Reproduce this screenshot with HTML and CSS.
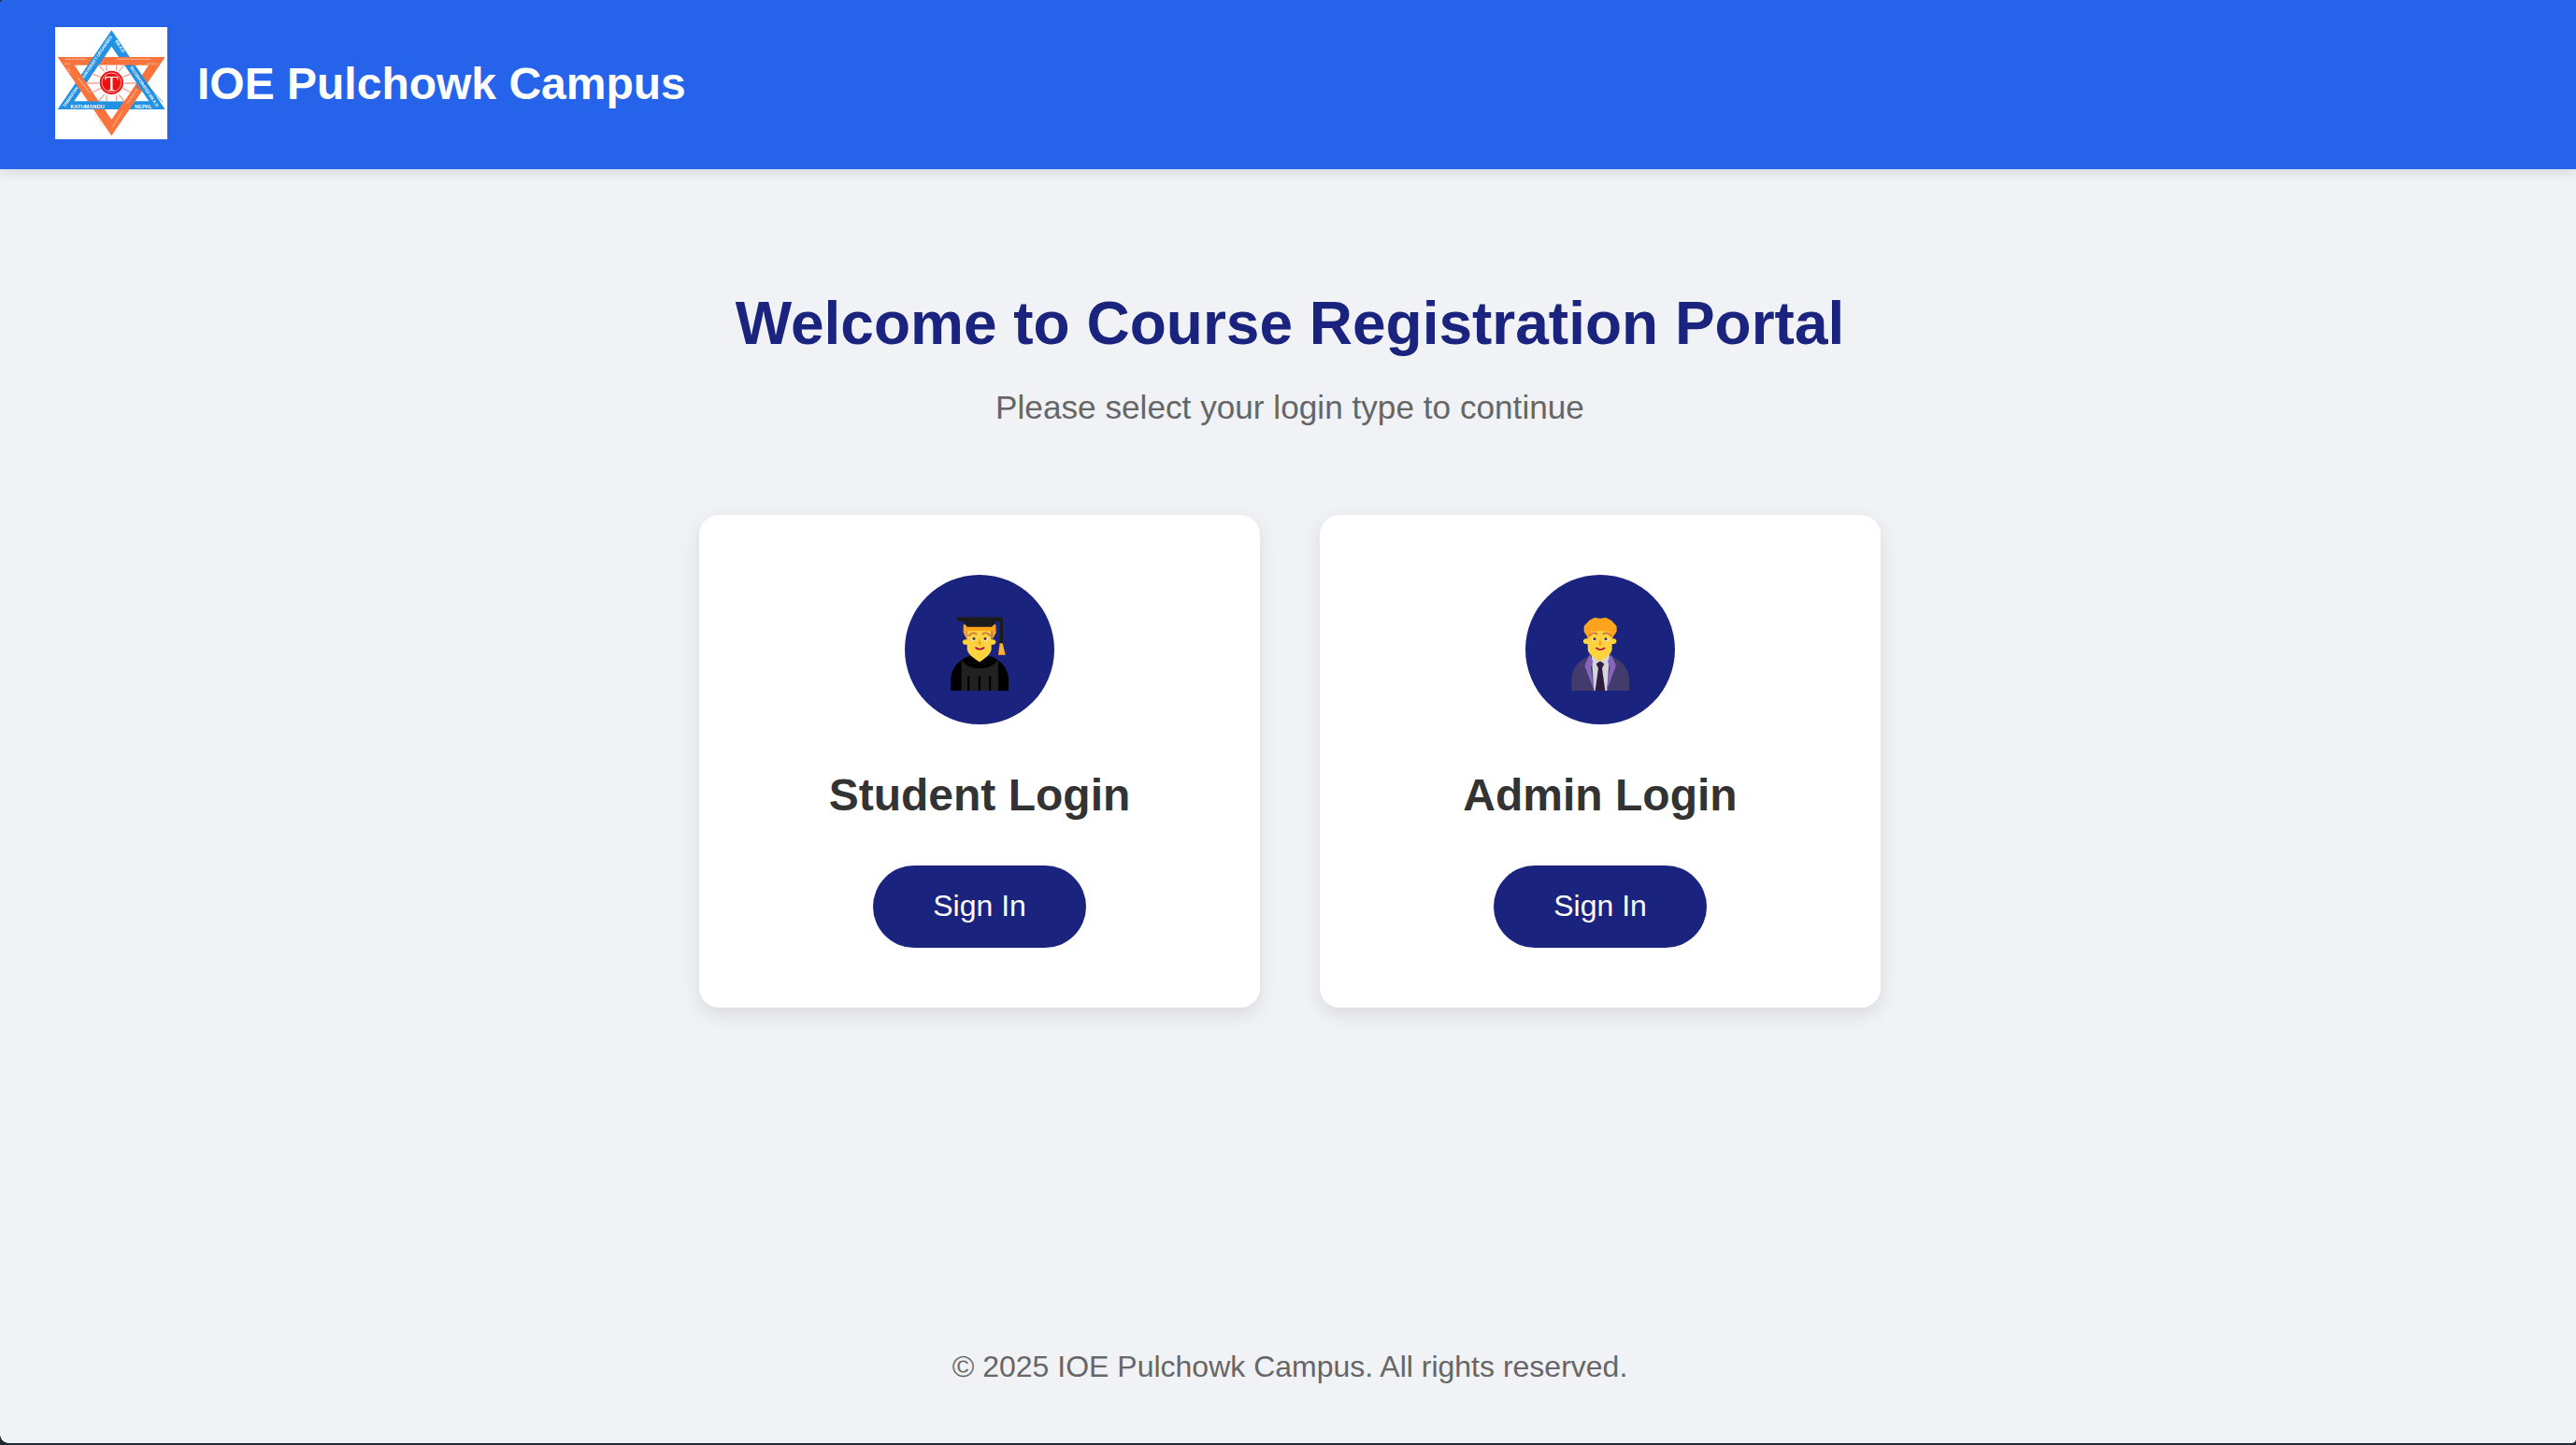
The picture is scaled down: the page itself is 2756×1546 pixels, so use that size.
FILE: index.html
```html
<!DOCTYPE html>
<html lang="en">
<head>
<meta charset="utf-8">
<title>IOE Pulchowk Campus</title>
<link rel="stylesheet" href="styles.css">
</head>
<body>
<header class="site-header">
  <svg class="logo" viewBox="0 0 360 360" aria-label="Tribhuvan University logo">
    <defs>
      <path id="blue-band" fill-rule="evenodd" d="M181 10 353 264H8ZM181 62 61 238H301Z"/>
      <clipPath id="cross-a"><rect x="100" y="96" width="65" height="26"/></clipPath>
      <clipPath id="cross-b"><polygon points="335,122 256.5,238 221,238 300,122"/></clipPath>
      <clipPath id="cross-c"><rect x="100" y="238" width="65" height="26"/></clipPath>
    </defs>
    <rect width="360" height="360" fill="#fff"/>
    <use href="#blue-band" fill="#2391e4"/>
    <path fill="#f8743c" fill-rule="evenodd" d="M8 96H353L181 349ZM62 122 181 297 300 122Z"/>
    <g fill="#2391e4">
      <use href="#blue-band" clip-path="url(#cross-a)"/>
      <use href="#blue-band" clip-path="url(#cross-b)"/>
      <use href="#blue-band" clip-path="url(#cross-c)"/>
    </g>
    <path class="logo-rule" d="M236 122 345 240M212 122 270 200"/>
    <polygon points="140,122 222,122 261,180 222,238 140,238 101,180" fill="#fff"/>
    <path class="logo-petal" d="M140 122 158 142M222 122 204 142M165 122V140M197 122V140M101 180H140M261 180H222M118 150 146 160M244 150 216 160M118 210 146 196M244 210 216 196M140 238 158 216M222 238 204 216M165 238V218M197 238V218"/>
    <path class="logo-fine" d="M32 103H100M198 103H305M30 118H50M296 118H330M75 165 112 212M262 200 232 245M185 320 215 270M155 318 130 280M40 132 50 146"/>
    <circle cx="181" cy="178" r="38" fill="#ee1111"/>
    <circle cx="181" cy="178" r="31" fill="none" stroke="#fff" stroke-width="2"/>
    <text class="logo-t" x="181" y="203" text-anchor="middle">T</text>
    <text class="logo-label" x="104" y="260" text-anchor="middle">KATHMANDU</text>
    <text class="logo-label" x="284" y="260" text-anchor="middle">NEPAL</text>
    <text class="logo-band" transform="translate(94 164) rotate(-56)">UNIVERSITY ORGANISED</text>
    <text class="logo-band" transform="translate(32 258) rotate(-56)">TRIBHUVAN</text>
    <text class="logo-band" transform="translate(240 130) rotate(56)">INCORPORATED BB.A.D</text>
    <text class="logo-band" transform="translate(192 46) rotate(56)">BB.A.D</text>
  </svg>
  <h2 class="brand">IOE Pulchowk Campus</h2>
</header>

<main class="content">
  <h1 class="title">Welcome to Course Registration Portal</h1>
  <p class="subtitle">Please select your login type to continue</p>
  <div class="cards">
    <section class="card">
      <div class="avatar">
        <svg class="emoji" viewBox="0 0 240 270">
          <path d="M28 252V215C28 172 70 135 120 135S213 172 213 215V252Z" fill="#000"/>
          <path d="M62 152C85 190 155 190 180 152V252H62Z" fill="#212121"/>
          <path d="M81 205h7v47h-7zM116 205h7v47h-7zM150 205h7v47h-7z" fill="#000"/>
          <path d="M80 40H158V88H165C175 90 175 102 165 104H158V118C158 135 135 150 120 160 105 150 80 135 80 118V104H73C63 102 63 90 73 88H80Z" fill="#ffd33d"/>
          <path d="M68 40H172L173 65 160 90V60H80V90L68 65Z" fill="#ffa41c"/>
          <path d="M68 30H172L160 47H80Z" fill="#1c1c1c"/>
          <path d="M54 16H188Q195 16 195 23V102H185V30H54Q47 30 47 23T54 16Z" fill="#1c1c1c"/>
          <path d="M185 100H194L203 137H180Z" fill="#ffb02e"/>
          <path d="M86 75Q97 62 110 70M130 70Q143 62 154 75" fill="none" stroke="#d67d3e" stroke-width="6" stroke-linecap="round"/>
          <ellipse cx="101" cy="86" rx="8" ry="6" fill="#fff"/><ellipse cx="139" cy="86" rx="8" ry="6" fill="#fff"/>
          <circle cx="102" cy="85" r="5" fill="#5c3a21"/><circle cx="138" cy="85" r="5" fill="#5c3a21"/>
          <path d="M120 84 125 103Q120 108 115 103Z" fill="#ff9c26"/>
          <path d="M108 114Q120 124 134 114" fill="none" stroke="#a8094f" stroke-width="5" stroke-linecap="round"/>
        </svg>
      </div>
      <h3 class="card-title">Student Login</h3>
      <button class="btn" type="button">Sign In</button>
    </section>
    <section class="card">
      <div class="avatar">
        <svg class="emoji" viewBox="0 0 240 270">
          <path d="M28 252V215C28 172 70 135 120 135S213 172 213 215V252Z" fill="#433b6b"/>
          <path d="M92 135H150L142 252H100Z" fill="#d4d4dc"/>
          <path d="M86 135 97 158 90 178 101 252 70 172ZM155 135 144 158 151 178 140 252 171 172Z" fill="#8764be"/>
          <path d="M120 157 133 166 126 180 136 252H104L114 180 107 166Z" fill="#321b41"/>
          <path d="M80 55H158V85H165C175 87 175 100 165 102H158V118C158 135 135 150 120 158 105 150 80 135 80 118V102H73C63 100 63 87 73 85H80Z" fill="#ffd33d"/>
          <path d="M68 45 85 26 102 17 120 20 138 17 156 26 173 45V62L162 78 158 88 150 64C130 58 110 58 90 64L82 88 78 78 68 62Z" fill="#ffa41c"/>
          <path d="M86 75Q97 62 110 70M130 70Q143 62 154 75" fill="none" stroke="#d67d3e" stroke-width="6" stroke-linecap="round"/>
          <ellipse cx="101" cy="87" rx="8" ry="6" fill="#fff"/><ellipse cx="139" cy="87" rx="8" ry="6" fill="#fff"/>
          <circle cx="102" cy="86" r="5" fill="#5c3a21"/><circle cx="138" cy="86" r="5" fill="#5c3a21"/>
          <path d="M120 85 125 104Q120 109 115 104Z" fill="#ff9c26"/>
          <path d="M108 115Q120 125 134 115" fill="none" stroke="#a8094f" stroke-width="5" stroke-linecap="round"/>
        </svg>
      </div>
      <h3 class="card-title">Admin Login</h3>
      <button class="btn" type="button">Sign In</button>
    </section>
  </div>
</main>

<footer class="site-footer">© 2025 IOE Pulchowk Campus. All rights reserved.</footer>
</body>
</html>
```

FILE: styles.css
```css
* { box-sizing: border-box; }
html, body { margin: 0; height: 100%; }
html::before {
  content: "";
  position: fixed;
  top: 0;
  left: 0;
  width: 3px;
  height: 3px;
  background: radial-gradient(circle at 100% 100%, transparent 2.5px, #1f2a37 3px);
}
body {
  display: flex;
  flex-direction: column;
  min-height: 100vh;
  background: #f0f2f5;
  font-family: "Liberation Sans", Arial, sans-serif;
  border-bottom: 2px solid #1f2a37;
}
body::before,
body::after {
  content: "";
  position: fixed;
  bottom: 2px;
}
body::before {
  left: 0;
  width: 9px;
  height: 9px;
  background: radial-gradient(circle at 100% 0, transparent 8.5px, #1f2a37 9px);
}
body::after {
  right: 0;
  width: 4px;
  height: 4px;
  background: radial-gradient(circle at 0 0, transparent 3.5px, #1f2a37 4px);
}
.site-header {
  display: flex;
  align-items: center;
  gap: 32px;
  height: 181px;
  padding: 0 59px 3px;
  background: #2563eb;
  box-shadow: 0 4px 12px rgba(0, 0, 0, 0.1);
}
.logo { width: 120px; height: 120px; flex: none; filter: blur(0.4px); }
.logo-label { font: bold 17px "Liberation Sans", sans-serif; fill: #fff; }
.logo-band { font: bold 13px "Liberation Sans", sans-serif; fill: #fff; }
.logo-t { font: 72px "Liberation Serif", serif; fill: #fff; }
.logo-rule { fill: none; stroke: #1a6fc0; stroke-width: 2; }
.logo-petal { fill: none; stroke: #f4a596; stroke-width: 4; }
.logo-fine { fill: none; stroke: #ffc9ae; stroke-width: 4; stroke-dasharray: 4 3; }
.brand {
  margin: 0;
  color: #fff;
  font-size: 48px;
  font-weight: 700;
}
.content {
  flex: 1;
  display: flex;
  flex-direction: column;
  align-items: center;
  padding: 129px 0 0 4px;
}
.title {
  margin: 0;
  color: #1a237e;
  font-size: 64px;
  font-weight: 700;
  line-height: 1.15;
}
.subtitle {
  margin: 32px 0 0;
  color: #666;
  font-size: 35.2px;
}
.cards {
  display: flex;
  gap: 64px;
  margin-top: 95px;
}
.card {
  display: flex;
  flex-direction: column;
  align-items: center;
  width: 600px;
  height: 527px;
  padding-top: 64px;
  background: #fff;
  border-radius: 21px;
  box-shadow: 0 7px 21px rgba(0, 0, 0, 0.1);
}
.avatar {
  display: flex;
  align-items: center;
  justify-content: center;
  width: 160px;
  height: 160px;
  border-radius: 50%;
  background: #1a237e;
}
.emoji { width: 80px; height: 90px; margin-top: 10px; }
.card-title {
  margin: 48px 0 0;
  color: #333;
  font-size: 48px;
  font-weight: 700;
}
.btn {
  margin-top: 48px;
  width: 228px;
  height: 88px;
  border: 0;
  border-radius: 44px;
  background: #1a237e;
  color: #fff;
  font-family: inherit;
  font-size: 32px;
}
.site-footer {
  padding: 0 0 63px 4px;
  color: #666;
  font-size: 32px;
  text-align: center;
}
```
